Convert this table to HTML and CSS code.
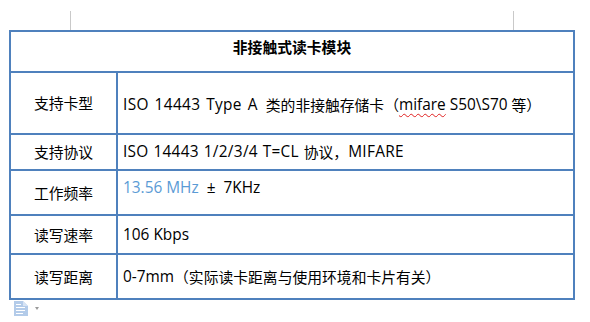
FILE: index.html
```html
<!DOCTYPE html>
<html lang="zh-CN">
<head>
<meta charset="utf-8">
<title>非接触式读卡模块</title>
<link rel="stylesheet" href="styles.css">
</head>
<body>
<div class="page">
  <div class="marks"><span class="mark"></span><span class="mark"></span></div>
  <div class="table">
    <div class="cell head">非接触式读卡模块</div>

    <div class="cell label">支持卡型</div>
    <div class="cell value r1"><span class="wide">ISO 14443 Type A</span>&nbsp; <span class="cjk">类的非接触存储卡（</span><span class="spell">mifare</span>&nbsp;S50\S70 <span class="cjk">等）</span></div>

    <div class="cell label">支持协议</div>
    <div class="cell value"><span class="wide2">ISO 14443 1/2/3/4 T=CL </span><span class="cjk">协议，</span><span class="wide2">MIFARE</span></div>

    <div class="cell label">工作频率</div>
    <div class="cell value r3"><span class="blue">13.56 MHz</span>&nbsp; ±&nbsp; 7KHz</div>

    <div class="cell label">读写速率</div>
    <div class="cell value">106 Kbps</div>

    <div class="cell label last">读写距离</div>
    <div class="cell value last">0-7mm<span class="cjk">（实际读卡距离与使用环境和卡片有关）</span></div>
  </div>
  <div class="paste">
    <svg class="paste-icon" width="14" height="15" viewBox="0 0 14 15">
      <path d="M0 0 H9 L14 5 V15 H0 Z" fill="#b3cbe9"/>
      <path d="M9 0 V5 H14" fill="#d6e3f4"/>
      <rect x="2" y="3" width="5" height="1" fill="#fff"/>
      <rect x="2" y="6" width="9" height="1" fill="#fff"/>
      <rect x="2" y="9" width="9" height="1" fill="#fff"/>
      <rect x="2" y="12" width="7" height="1" fill="#fff"/>
    </svg>
    <span class="caret"></span>
  </div>
</div>
</body>
</html>
```

FILE: styles.css
```css
html, body {
  margin: 0;
  padding: 0;
  background: #ffffff;
}

.page {
  width: 590px;
  height: 322px;
  overflow: hidden;
  font-family: "Open Sans", "Noto Sans CJK SC", sans-serif;
  font-size: 15.4px;
  color: #000;
}

.marks {
  height: 30px;
  box-sizing: border-box;
  padding: 11px 76px 0 70px;
  display: flex;
  justify-content: space-between;
}

.mark {
  width: 1px;
  height: 19px;
  background: #c9c9c9;
}

.table {
  margin-left: 9px;
  width: 566px;
  box-sizing: border-box;
  border: 2px solid #4f81bd;
  display: grid;
  grid-template-columns: 107px 1fr;
  grid-template-rows: 41px 62px 36px 45px 39px 43px;
}

.cell {
  border-bottom: 2px solid #4f81bd;
  display: flex;
  align-items: center;
  white-space: pre;
  line-height: 20px;
}

.cell.last {
  border-bottom: none;
}

.head {
  grid-column: 1 / 3;
  justify-content: center;
  align-items: flex-start;
  padding-top: 5px;
  font-weight: bold;
  font-family: "Noto Sans CJK SC", sans-serif;
  font-size: 14.8px;
}

.label {
  border-right: 2px solid #4f81bd;
  justify-content: center;
  font-family: "Noto Sans CJK SC", sans-serif;
  font-size: 14.8px;
}

.value {
  padding-left: 5px;
}

.cjk {
  font-family: "Noto Sans CJK SC", sans-serif;
  font-size: 14.8px;
}

.wide {
  word-spacing: 1.5px;
  letter-spacing: 0.35px;
}

.wide2 {
  word-spacing: 0.5px;
  letter-spacing: 0.3px;
}

.r1 {
  padding-top: 3px;
}

.r3 {
  padding-bottom: 10px;
}

.blue {
  color: #5b9bd5;
}

.spell {
  text-decoration: underline wavy #e02020;
  text-decoration-thickness: 1px;
  text-underline-offset: 3px;
}

.paste {
  display: flex;
  align-items: center;
  padding: 1px 0 0 14px;
  gap: 7px;
}

.paste-icon {
  display: block;
}

.caret {
  width: 0;
  height: 0;
  border-left: 2.5px solid transparent;
  border-right: 2.5px solid transparent;
  border-top: 3px solid #9a9a9a;
}
```
